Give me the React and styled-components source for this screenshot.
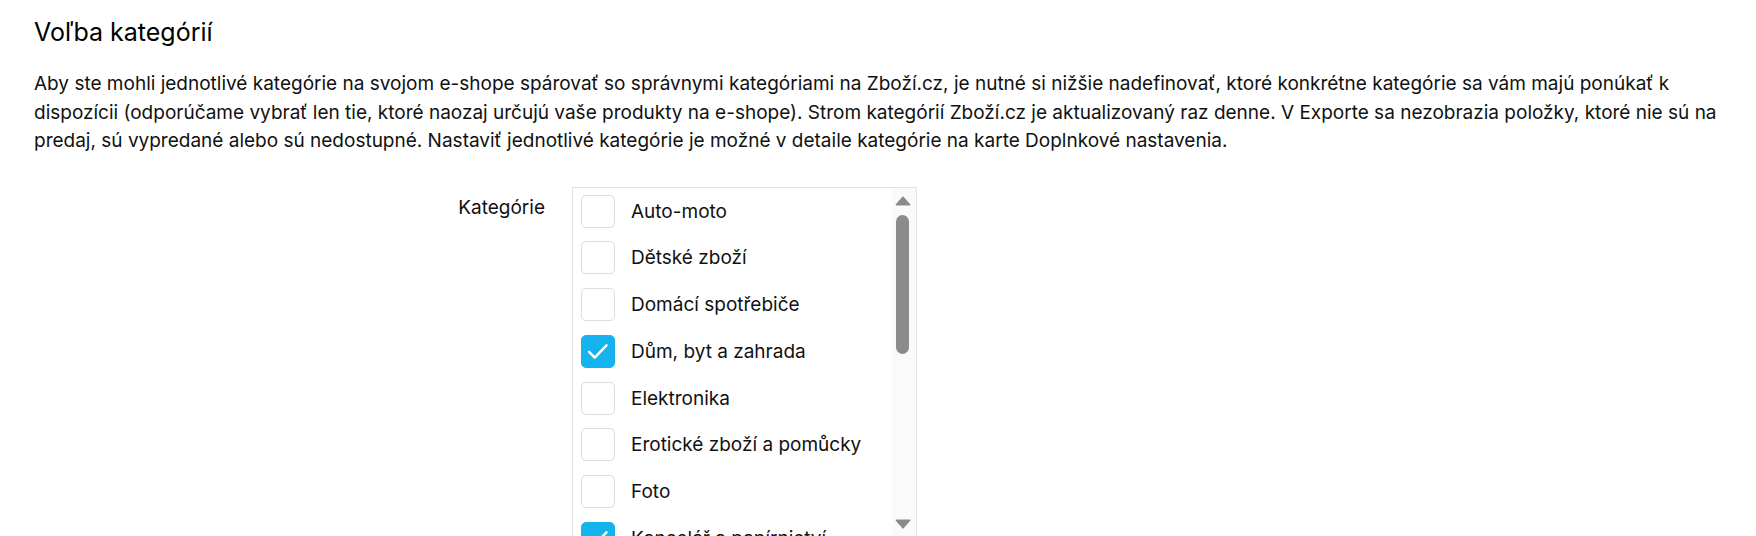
import React, { useState } from 'react';
import styled, { createGlobalStyle } from 'styled-components';

const GlobalStyle = createGlobalStyle`
  html, body {
    margin: 0;
    padding: 0;
    background: #fff;
  }
  body {
    font-family: Inter, "Noto Sans", "Liberation Sans", sans-serif;
    color: #111;
  }
`;

const Page = styled.div`
  padding: 17px 20px 0 34px;
`;

const Title = styled.h2`
  margin: 0;
  font-size: 25px;
  line-height: 30px;
  font-weight: 400;
  color: #000;
`;

const Intro = styled.p`
  margin: 23px 0 0;
  font-size: 19px;
  line-height: 28.5px;
  color: #111;
`;

const FormRow = styled.div`
  display: grid;
  grid-template-columns: 538px 345px;
  margin-top: 31px;
  align-items: start;
`;

const Label = styled.label`
  padding: 7px 27px 0 0;
  text-align: right;
  font-size: 19px;
  line-height: 28.5px;
`;

const ListBox = styled.div`
  box-sizing: border-box;
  height: 352px;
  border: 1px solid #e2e2e2;
  display: flex;
`;

const ListArea = styled.div`
  flex: 1;
  min-width: 0;
  overflow-y: auto;
  scrollbar-width: none;
  padding: 7px 8px;
`;

const Items = styled.div`
  display: flex;
  flex-direction: column;
  gap: 13.8px;
`;

const Item = styled.label`
  display: flex;
  align-items: center;
  gap: 16px;
  height: 33px;
  font-size: 19px;
  white-space: nowrap;
  cursor: pointer;
`;

const Box = styled.span`
  box-sizing: border-box;
  flex: none;
  width: 34px;
  height: 33px;
  border-radius: 5px;
  border: 1px solid ${p => (p.$checked ? '#14b3ee' : '#dcdcdc')};
  background: ${p => (p.$checked ? '#14b3ee' : '#fff')};
  display: flex;
  align-items: center;
  justify-content: center;

  svg {
    display: block;
  }
`;

const Rail = styled.div`
  flex: none;
  width: 24px;
  background: #fafafa;
  display: flex;
  flex-direction: column;
`;

const ArrowBtn = styled.div`
  flex: none;
  height: 27px;
  padding-left: 3px;
  display: flex;
  align-items: center;

  svg {
    display: block;
  }
`;

const Track = styled.div`
  flex: 1;
  min-height: 0;
  padding-left: 4px;
`;

const Thumb = styled.div`
  width: 13px;
  height: 139px;
  border-radius: 7px;
  background: #8b8b8b;
`;

const categories = [
  'Auto-moto',
  'Dětské zboží',
  'Domácí spotřebiče',
  'Dům, byt a zahrada',
  'Elektronika',
  'Erotické zboží a pomůcky',
  'Foto',
  'Kancelář a papírnictví',
  'Kosmetika a zdraví',
  'Kultura a zábava',
  'Oblečení a móda',
  'Počítače',
  'Sport',
  'Telefony',
  'Zdraví',
  'Zvířata',
];

function Check({ checked, onToggle }) {
  return (
    <Box $checked={checked} onClick={onToggle}>
      {checked && (
        <svg width="34" height="33" viewBox="0 0 34 33">
          <path
            d="M7.5 17 L13.5 23 L26 10"
            fill="none"
            stroke="#fff"
            strokeWidth="2.6"
            strokeLinecap="round"
            strokeLinejoin="round"
          />
        </svg>
      )}
    </Box>
  );
}

function Arrow({ down }) {
  return (
    <svg width="16" height="10" viewBox="0 0 16 10">
      <path
        d={down ? 'M8 8.8 L14.6 1.2 H1.4 Z' : 'M8 1.2 L14.6 8.8 H1.4 Z'}
        fill="#8a8a8a"
        stroke="#8a8a8a"
        strokeWidth="1.6"
        strokeLinejoin="round"
      />
    </svg>
  );
}

export default function App() {
  const [vybrane, setVybrane] = useState(['Dům, byt a zahrada', 'Kancelář a papírnictví']);
  const [posun, setPosun] = useState(0);

  const prepni = nazov => {
    setVybrane(v => (v.includes(nazov) ? v.filter(x => x !== nazov) : [...v, nazov]));
  };

  // posun palca podla scrollu zoznamu
  const onScroll = e => {
    const el = e.currentTarget;
    const max = el.scrollHeight - el.clientHeight;
    setPosun(max > 0 ? el.scrollTop / max : 0);
  };

  return (
    <>
      <GlobalStyle />
      <Page>
        <Title>Voľba kategórií</Title>
        <Intro>
          Aby ste mohli jednotlivé kategórie na svojom e-shope spárovať so správnymi kategóriami na Zboží.cz, je nutné si
          nižšie nadefinovať, ktoré konkrétne kategórie sa vám majú ponúkať k dispozícii (odporúčame vybrať len tie, ktoré
          naozaj určujú vaše produkty na e-shope). Strom kategórií Zboží.cz je aktualizovaný raz denne. V Exporte sa
          nezobrazia položky, ktoré nie sú na predaj, sú vypredané alebo sú nedostupné. Nastaviť jednotlivé kategórie je
          možné v detaile kategórie na karte Doplnkové nastavenia.
        </Intro>
        <FormRow>
          <Label>Kategórie</Label>
          <ListBox>
            <ListArea onScroll={onScroll}>
              <Items>
                {categories.map(c => (
                  <Item key={c}>
                    <Check checked={vybrane.includes(c)} onToggle={() => prepni(c)} />
                    {c}
                  </Item>
                ))}
              </Items>
            </ListArea>
            <Rail>
              <ArrowBtn>
                <Arrow />
              </ArrowBtn>
              <Track>
                <Thumb style={{ marginTop: posun * 156 }} />
              </Track>
              <ArrowBtn>
                <Arrow down />
              </ArrowBtn>
            </Rail>
          </ListBox>
        </FormRow>
      </Page>
    </>
  );
}
